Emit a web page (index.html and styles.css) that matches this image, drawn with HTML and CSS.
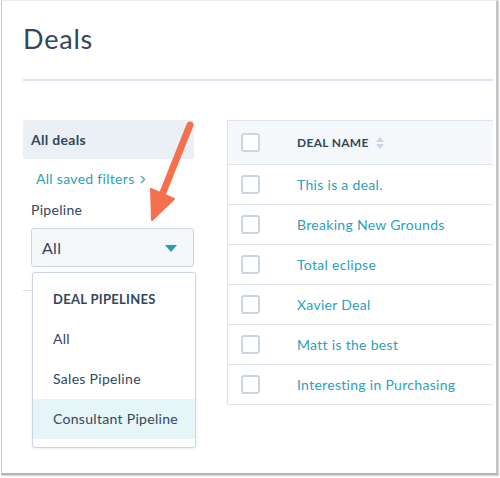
FILE: index.html
```html
<!DOCTYPE html>
<html>
<head>
<meta charset="utf-8">
<link rel="stylesheet" href="styles.css">
</head>
<body>
<div class="frame">
  <header class="head">
    <h1 class="title">Deals</h1>
  </header>
  <div class="main">
    <aside class="side">
      <div class="all-deals">All deals</div>
      <a class="saved">All saved filters <svg class="chev" width="6" height="9" viewBox="0 0 6 9"><path d="M1 1 L4.5 4.5 L1 8" fill="none" stroke="#5a9db5" stroke-width="1.4"/></svg></a>
      <div class="label">Pipeline</div>
      <div class="select">
        <span>All</span>
        <svg class="caret" width="12" height="7" viewBox="0 0 12 7"><path d="M0 0 H12 L6 7 Z" fill="#2a9bb7"/></svg>
      </div>
      <div class="side-rule"></div>
      <div class="dropdown">
        <div class="dd-item dd-head">DEAL PIPELINES</div>
        <div class="dd-item">All</div>
        <div class="dd-item">Sales Pipeline</div>
        <div class="dd-item dd-active">Consultant Pipeline</div>
      </div>
    </aside>
    <section class="table">
      <div class="row hrow">
        <span class="cb"></span>
        <span class="hname">DEAL NAME</span>
        <svg class="sort" width="8" height="12" viewBox="0 0 8 12"><path d="M4 0 L8 5 H0 Z M0 7 H8 L4 12 Z" fill="#cbd6e2"/></svg>
      </div>
      <div class="row"><span class="cb"></span><a class="name">This is a deal.</a></div>
      <div class="row"><span class="cb"></span><a class="name">Breaking New Grounds</a></div>
      <div class="row"><span class="cb"></span><a class="name">Total eclipse</a></div>
      <div class="row"><span class="cb"></span><a class="name">Xavier Deal</a></div>
      <div class="row"><span class="cb"></span><a class="name">Matt is the best</a></div>
      <div class="row"><span class="cb"></span><a class="name">Interesting in Purchasing</a></div>
    </section>
  </div>
  <svg class="arrow" width="60" height="110" viewBox="0 0 60 110">
    <line x1="48" y1="4" x2="20" y2="74" stroke="#f5714d" stroke-width="7" stroke-linecap="round"/>
    <path d="M9 68 L32 78 L10 99 Z" fill="#f5714d" stroke="#f5714d" stroke-width="2" stroke-linejoin="round"/>
  </svg>
</div>
</body>
</html>
```
FILE: styles.css
```css
* { box-sizing: border-box; }
html, body { margin: 0; padding: 0; background: #fff; }
body {
  font-family: Lato, "Open Sans", sans-serif;
  color: #33475b;
  width: 500px;
  height: 478px;
  overflow: hidden;
  letter-spacing: 0.3px;
}
.frame {
  position: relative;
  margin-left: 1px;
  width: 497px;
  height: 475px;
  border-top: 1px solid #ececec;
  border-left: 1px solid #c9c9c9;
  border-right: 2px solid #c4c4c4;
  border-bottom: 2px solid #b5b5b5;
  box-shadow: 1px 1px 1px rgba(0,0,0,0.15);
  padding: 0 3px 0 21px;
  overflow: hidden;
}
.head {
  height: 80px;
  border-bottom: 2px solid #dbe4ee;
}
.title {
  margin: 0;
  padding-top: 22px;
  font-size: 27px;
  line-height: 32px;
  font-weight: 400;
  color: #33475b;
  letter-spacing: 0.8px;
}
.main {
  display: flex;
  gap: 33px;
  padding-top: 39px;
}
.side {
  width: 171px;
  flex: none;
  display: flex;
  flex-direction: column;
}
.all-deals {
  height: 39px;
  background: #eaf0f6;
  border-radius: 3px;
  padding-left: 8px;
  font-weight: 700;
  font-size: 14px;
  line-height: 39px;
}
.saved {
  margin-top: 11px;
  padding-left: 13px;
  font-size: 14px;
  line-height: 18px;
  color: #2d9fba;
}
.chev { margin-left: 2px; vertical-align: 0; }
.label {
  margin-top: 13px;
  padding-left: 8px;
  font-size: 14px;
  line-height: 18px;
}
.select {
  margin-top: 9px;
  margin-left: 8px;
  height: 39px;
  background: #f5f8fa;
  border: 1px solid #cbd6e2;
  border-radius: 3px;
  display: flex;
  align-items: center;
  justify-content: space-between;
  padding: 0 16px 0 10px;
  font-size: 16px;
}
.caret { margin-top: 1px; }
.side-rule {
  margin-top: 23px;
  height: 1px;
  background: #dbe4ee;
}
.dropdown {
  position: absolute;
  left: 30px;
  top: 271px;
  width: 164px;
  background: #fff;
  border: 1px solid #cbd6e2;
  border-radius: 3px;
  box-shadow: 0 1px 3px rgba(0,0,0,0.08);
  padding: 6px 0 8px;
}
.dd-item {
  height: 40px;
  line-height: 40px;
  padding-left: 20px;
  font-size: 14px;
  color: #33475b;
}
.dd-head {
  font-weight: 700;
  font-size: 13px;
  color: #33475b;
}
.dd-active { background: #e5f5f8; }
.table {
  flex: 1;
  border: 1px solid #dfe3eb;
  border-right: none;
  align-self: flex-start;
}
.row {
  height: 40px;
  display: flex;
  align-items: center;
  border-top: 1px solid #dfe3eb;
  padding-left: 13px;
}
.row:first-child { border-top: none; }
.hrow {
  height: 43px;
  background: #f5f8fa;
}
.cb {
  width: 19px;
  height: 19px;
  border: 2px solid #cbd6e2;
  border-radius: 3px;
  background: #fff;
  flex: none;
  margin-right: 37px;
}
.hname {
  font-size: 12px;
  font-weight: 700;
  color: #33475b;
}
.sort { margin-left: 7px; }
.name {
  font-size: 14px;
  color: #2d9fba;
}
.arrow {
  position: absolute;
  left: 140px;
  top: 120px;
}
```
